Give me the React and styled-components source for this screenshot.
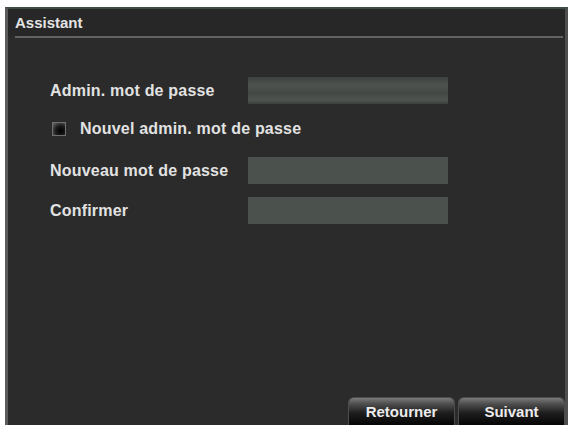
import React, {useState} from 'react';
import styled, {createGlobalStyle} from 'styled-components';

const GlobalStyle = createGlobalStyle`
  body {
    margin: 0;
    background: #ffffff;
    font-family: "Liberation Sans", Arial, sans-serif;
  }
`;

const Window = styled.div`
  margin: 7px 0 0 5px;
  width: 563px;
  height: 418px;
  box-sizing: border-box;
  background: #2b2b2b;
  border-top: 2px solid #3f4d42;
  border-left: 3px solid #5b5b5b;
  border-right: 3px solid #4e4e4e;
  display: flex;
  flex-direction: column;
`;

const TitleBar = styled.div`
  height: 27px;
  padding-left: 7px;
  display: flex;
  align-items: center;
  background: #272727;
  color: #e4e4e4;
  font-size: 15px;
  font-weight: bold;
`;

const Separator = styled.div`
  height: 2px;
  margin: 0 2px 0 7px;
  background: #626262;
`;

const Form = styled.div`
  padding: 39px 0 0 42px;
  display: flex;
  flex-direction: column;
  gap: 13px;
  flex: 1;
`;

const Row = styled.div`
  display: flex;
  align-items: center;
  height: 27px;
`;

const Label = styled.label`
  width: 198px;
  color: #e2e2e2;
  font-size: 16px;
  font-weight: bold;
  letter-spacing: 0.2px;
  white-space: nowrap;
`;

const Field = styled.input`
  width: 200px;
  height: 27px;
  box-sizing: border-box;
  border: none;
  outline: none;
  padding: 0 6px;
  color: #eee;
  background: ${({$dim}) => ($dim
    ? 'linear-gradient(#3e423f 0%, #4d524f 30%, #444845 60%, #4e5350 85%, #3c3f3d 100%)'
    : '#4b524e')};
`;

const Check = styled.span`
  width: 14px;
  height: 14px;
  margin: -4px 14px 0 2px;
  box-sizing: border-box;
  border: 1px solid #707070;
  background: radial-gradient(circle at 65% 65%, #000 0%, #1a1a1a 45%, #6a6a6a 100%);
  cursor: pointer;
`;

const CheckLabel = styled(Label)`
  width: auto;
  margin-top: -4px;
  cursor: pointer;
`;

const ButtonBar = styled.div`
  display: flex;
  justify-content: flex-end;
  gap: 3px;
`;

const Button = styled.button`
  width: 107px;
  height: 28px;
  border: 1px solid #4c4c4c;
  border-bottom: none;
  border-radius: 6px 6px 0 0;
  background: linear-gradient(#7a7a7a 0%, #4e4e4e 22%, #1e1e1e 55%, #050505 100%);
  color: #ececec;
  font-family: "Liberation Sans", Arial, sans-serif;
  font-size: 15px;
  font-weight: bold;
  cursor: pointer;
`;

export default function App() {
  const [checked, setChecked] = useState(false);

  return (
    <>
      <GlobalStyle/>
      <Window>
        <TitleBar>Assistant</TitleBar>
        <Separator/>
        <Form>
          <Row>
            <Label>Admin. mot de passe</Label>
            <Field type="password" $dim/>
          </Row>
          <Row onClick={() => setChecked(!checked)}>
            <Check/>
            <CheckLabel>Nouvel admin. mot de passe</CheckLabel>
          </Row>
          <Row>
            <Label>Nouveau mot de passe</Label>
            <Field type="password"/>
          </Row>
          <Row>
            <Label>Confirmer</Label>
            <Field type="password"/>
          </Row>
        </Form>
        <ButtonBar>
          <Button type="button">Retourner</Button>
          <Button type="button">Suivant</Button>
        </ButtonBar>
      </Window>
    </>
  );
}
